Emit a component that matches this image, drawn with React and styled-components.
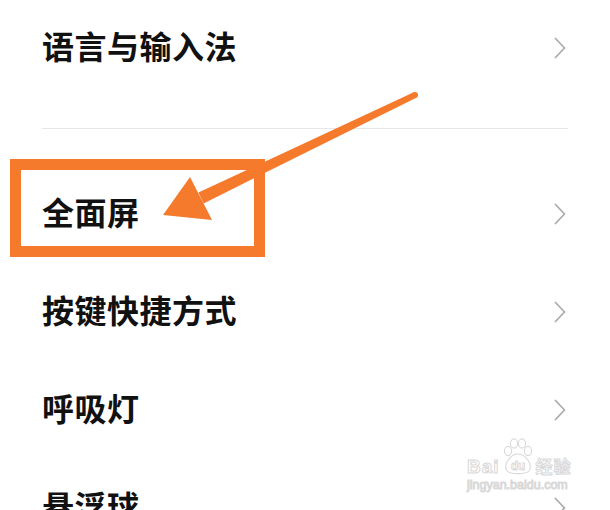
import React from 'react';
import styled, { createGlobalStyle } from 'styled-components';

const GlobalStyle = createGlobalStyle`
  html, body {
    margin: 0;
    padding: 0;
    background: #fff;
  }
  body {
    font-family: "Noto Sans CJK SC", "Noto Sans", sans-serif;
  }
`;

const ORANGE = '#f57a2c';

const Screen = styled.div`
  position: relative;
  width: 610px;
  height: 510px;
  overflow: hidden;
  background: #fff;
`;

const Row = styled.div`
  display: flex;
  align-items: center;
  justify-content: space-between;
  height: ${ props => props.height || 98 }px;
  padding: 0 44px 0 42px;
  box-sizing: border-box;
`;

const Label = styled.span`
  font-size: 32px;
  font-weight: 600;
  color: #111;
  letter-spacing: 0.5px;
  padding-bottom: 6px;
`;

const Divider = styled.div`
  margin: 32px 42px 36px 42px;
  height: 1px;
  background: #e6e6e6;
`;

const HighlightBox = styled.div`
  position: absolute;
  left: 10px;
  top: 159px;
  width: 255px;
  height: 98px;
  border: 11px solid ${ ORANGE };
  box-sizing: border-box;
  pointer-events: none;
`;

const Overlay = styled.svg`
  position: absolute;
  left: 0;
  top: 0;
  pointer-events: none;
`;

const Watermark = styled.div`
  position: absolute;
  left: 467px;
  top: 438px;
  display: flex;
  flex-direction: column;
  align-items: flex-start;
  color: transparent;
  -webkit-text-stroke: 1px #d8d8d8;
  font-family: "Liberation Sans", Arial, sans-serif;
  pointer-events: none;
`;

const MarkLine = styled.div`
  display: flex;
  align-items: flex-end;
  gap: 3px;
  height: 37px;
`;

const MarkBig = styled.span`
  font-size: 19px;
  line-height: 17px;
  font-weight: 700;
  letter-spacing: 1px;
`;

const MarkCn = styled.span`
  font-family: "Noto Sans CJK SC", sans-serif;
  font-size: 17px;
  line-height: 19px;
  font-weight: 700;
  letter-spacing: 1px;
`;

const MarkUrl = styled.span`
  font-size: 12.5px;
  line-height: 15px;
  margin-top: 3px;
`;

function Chevron() {
  return (
    <svg width="12" height="22" viewBox="0 0 12 22">
      <polyline points="1.5,1.5 10.5,11 1.5,20.5" fill="none" stroke="#acacac" strokeWidth="1.8" strokeLinejoin="round" strokeLinecap="round" />
    </svg>
  );
}

function Paw() {
  return (
    <svg width="30" height="37" viewBox="0 0 30 37">
      <g fill="#fff" stroke="#d8d8d8" strokeWidth="1.1">
        <ellipse cx="5" cy="13" rx="3.6" ry="4.6" />
        <ellipse cx="11" cy="5.5" rx="3.6" ry="4.6" />
        <ellipse cx="19" cy="5.5" rx="3.6" ry="4.6" />
        <ellipse cx="25" cy="13" rx="3.6" ry="4.6" />
        <path d="M15 16 C 23 16, 30 27, 26 33 C 23 36.5, 7 36.5, 4 33 C 0 27, 7 16, 15 16 Z" />
      </g>
      <text x="15" y="32" textAnchor="middle" fontSize="12" fontWeight="700" fontFamily="Liberation Sans, Arial, sans-serif" fill="#fff" stroke="#d8d8d8" strokeWidth="0.8">du</text>
    </svg>
  );
}

const items = ['全面屏', '按键快捷方式', '呼吸灯', '悬浮球'];

export default function App() {
  return (
    <>
      <GlobalStyle />
      <Screen>
        <Row height={96}>
          <Label>语言与输入法</Label>
          <Chevron />
        </Row>
        <Divider />
        { items.map(item => (
          <Row key={ item }>
            <Label>{ item }</Label>
            <Chevron />
          </Row>
        )) }

        <HighlightBox />
        <Overlay width="610" height="510" viewBox="0 0 610 510">
          <polygon points="203.6,203.4 198.4,192.6 413.7,92.3 416.3,97.7" fill={ ORANGE } />
          <circle cx="415" cy="95" r="3" fill={ ORANGE } />
          <polygon points="163,215 190,177 212,220" fill={ ORANGE } />
        </Overlay>

        <Watermark>
          <MarkLine>
            <MarkBig>Bai</MarkBig>
            <Paw />
            <MarkCn>经验</MarkCn>
          </MarkLine>
          <MarkUrl>jingyan.baidu.com</MarkUrl>
        </Watermark>
      </Screen>
    </>
  );
}
